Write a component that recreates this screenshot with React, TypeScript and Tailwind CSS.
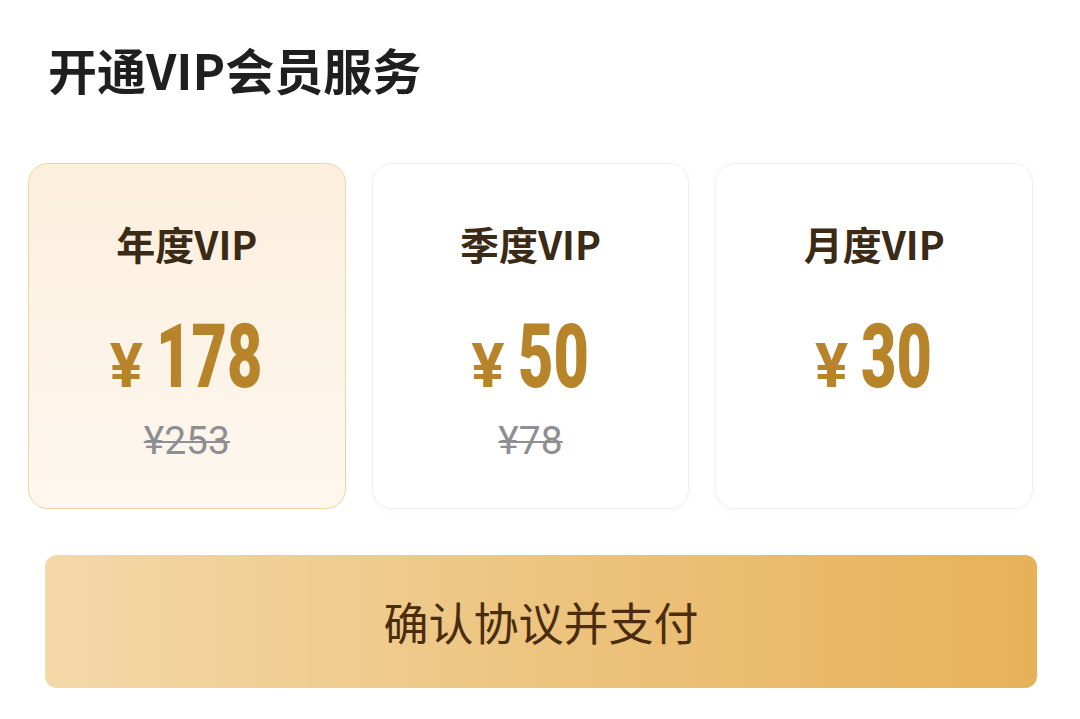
import React from 'react';

// shrink = unscaled digit width * (1 - 0.687), written per plan so Tailwind sees full class names
const plans = [
    { name: '年度VIP', price: '178', original: '¥253', active: true, shrink: 'mr-[-47px]' },
    { name: '季度VIP', price: '50', original: '¥78', active: false, shrink: 'mr-[-31px]' },
    { name: '月度VIP', price: '30', original: '', active: false, shrink: 'mr-[-31px]' },
];

function PlanCard({ plan }: { plan: (typeof plans)[number] }) {
    return (
        <div
            className={
                plan.active
                    ? 'h-[346px] rounded-[20px] border-[1.5px] border-[#edd5a0] bg-gradient-to-b from-[#fcefdd] to-[#fdf7ef] flex flex-col items-center pt-[60px]'
                    : 'h-[346px] rounded-[20px] border-[1.5px] border-[#f1f1f3] bg-white shadow-[0_1px_6px_rgba(0,0,0,0.04)] flex flex-col items-center pt-[60px]'
            }
        >
            <div className="text-[39px] font-bold leading-none text-[#3b2a15] font-['Noto_Sans_CJK_SC','Noto_Sans',sans-serif]">
                {plan.name}
            </div>

            <div className="mt-[49px] flex items-baseline leading-none text-[#b8842a] font-['Roboto','Liberation_Sans',sans-serif]">
                <span className="text-[62px] font-bold leading-none mr-[13px]">¥</span>
                <span
                    className={`inline-block text-[89px] font-black leading-none scale-x-[0.687] origin-left ${plan.shrink}`}
                >
                    {plan.price}
                </span>
            </div>

            <div className="mt-[21px] h-[39px] text-[39px] leading-none text-[#8e8e93] line-through decoration-[#8e8e93] decoration-2 font-['Roboto','Liberation_Sans',sans-serif]">
                {plan.original}
            </div>
        </div>
    );
}

export default function App() {
    return (
        <main className="w-[1080px] h-[719px] bg-white overflow-hidden">
            <h1 className="pl-[48px] pt-[44px] text-[49px] font-bold leading-none text-[#1f1f1f] font-['Noto_Sans_CJK_SC','Noto_Sans',sans-serif]">
                开通VIP会员服务
            </h1>

            <div className="mt-[70px] pl-[28px] pr-[47px] grid grid-cols-3 gap-[26px]">
                {plans.map((p) => (
                    <PlanCard key={p.name} plan={p} />
                ))}
            </div>

            <div className="mt-[46px] ml-[45px] w-[992px]">
                <button className="w-full h-[133px] rounded-[12px] bg-gradient-to-r from-[#f3d8a9] via-[#edc47f] to-[#e6b158] flex items-center justify-center text-[45px] text-[#4a2d0f] leading-none font-['Noto_Sans_CJK_SC','Noto_Sans',sans-serif]">
                    确认协议并支付
                </button>
            </div>
        </main>
    );
}
